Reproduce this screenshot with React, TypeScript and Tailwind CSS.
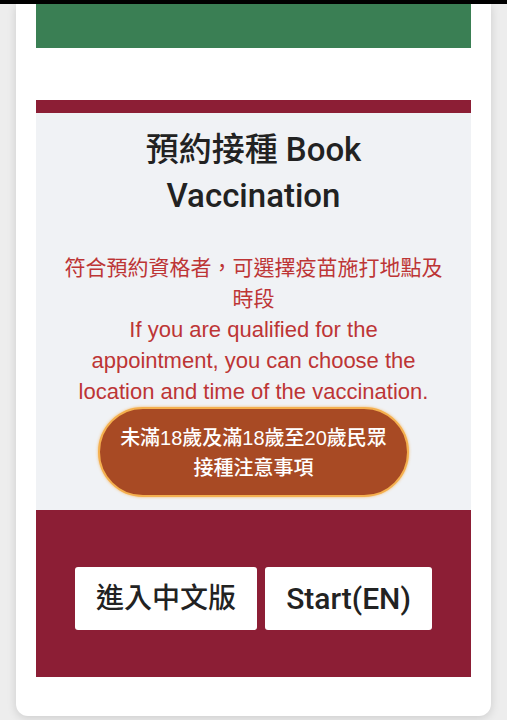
const font = "font-['Liberation_Sans','Noto_Sans_CJK_TC',sans-serif]";
const heading = "font-['Roboto','Noto_Sans_CJK_TC',sans-serif] font-medium";

export default function App() {
  return (
    <div className={`min-h-screen bg-[#ededed] ${font}`}>
      <div className="h-[4px] bg-black" />

      <div className="mx-[16px] rounded-b-[12px] bg-white px-[20px] pb-[39px] shadow-[0_2px_10px_rgba(0,0,0,0.14)]">
        {/* top green banner */}
        <div className="h-[44px] bg-[#3a7f54]" />

        <div className="h-[52px]" />

        {/* booking panel */}
        <section className="border-t-[13px] border-[#8c1e35] bg-[#f0f2f5] pt-[14px] pb-[13px] text-center">
          <h1 className={`text-[33px] leading-[46px] text-[#222] ${heading}`}>
            預約接種 Book
            <br />
            Vaccination
          </h1>

          <div className="mt-[33px] text-[#bd3535]">
            <p className="mx-auto max-w-[386px] text-[21px] leading-[31px]">
              符合預約資格者，可選擇疫苗施打地點及時段
            </p>
            <p className="mx-auto max-w-[372px] text-[22px] leading-[31px]">
              If you are qualified for the appointment, you can choose the location and time of the vaccination.
            </p>
          </div>

          <button className="rounded-full border-2 border-[#f4b04f] bg-[#a84a24] px-[20px] pt-[14px] pb-[12px] text-[20px] leading-[30px] font-medium text-white shadow-[0_0_3px_rgba(245,170,70,0.8)]">
            未滿18歲及滿18歲至20歲民眾
            <br />
            接種注意事項
          </button>
        </section>

        {/* entry buttons */}
        <div className="flex justify-center gap-[8px] bg-[#8c1e35] pt-[57px] pb-[47px]">
          <button className={`h-[63px] rounded-[3px] bg-white px-[21px] text-[28px] text-[#222] ${heading}`}>
            進入中文版
          </button>
          <button className={`h-[63px] rounded-[3px] bg-white px-[21px] text-[30px] text-[#222] ${heading}`}>
            Start(EN)
          </button>
        </div>
      </div>
    </div>
  );
}
